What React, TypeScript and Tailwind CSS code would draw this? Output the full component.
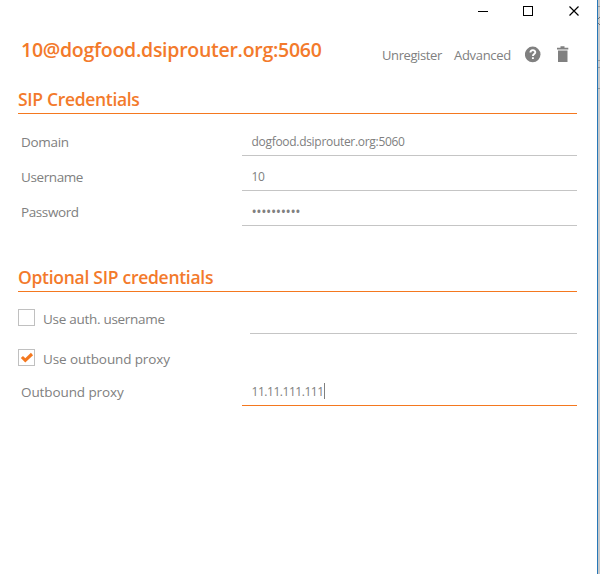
import type { ReactNode } from "react";

function SectionTitle({ children }: { children: ReactNode }) {
  return (
    <h2 className="h-[28px] border-b border-[#f4781f] text-[17.5px] leading-[27px] font-semibold whitespace-nowrap text-[#f37a2b]">
      {children}
    </h2>
  );
}

function Field({ label, children, active = false }: { label: ReactNode; children: ReactNode; active?: boolean }) {
  return (
    <div className="flex h-[35px]">
      <div className="w-[224px] pt-[11px] pl-[3px] text-[13.5px] leading-5 whitespace-nowrap">{label}</div>
      <div
        className={`flex flex-1 border-b pt-[12px] pl-[9.5px] text-[12px] leading-[18px] whitespace-nowrap ${active ? "border-[#f4781f]" : "border-[#c5c5c5]"}`}
      >
        {children}
      </div>
    </div>
  );
}

function CheckBox({ checked = false }: { checked?: boolean }) {
  return (
    <span className="block h-[17px] w-[17px] border border-[#c0c0c0]">
      {checked && (
        <svg width="15" height="15" viewBox="0 0 15 15">
          <path d="M2.9 7 L6.3 10.3 L13 4" fill="none" stroke="#f4781f" strokeWidth="3.1" />
        </svg>
      )}
    </span>
  );
}

export default function App() {
  return (
    <div className="flex h-[574px] w-[600px] overflow-hidden bg-white font-['Open_Sans','Noto_Sans',sans-serif] text-[#808080]">
      <main className="w-[597px] pr-[20px] pl-[18px]">
        <div className="-mr-[20px] flex h-[24px] justify-end">
          <svg width="130" height="24" viewBox="0 0 130 24" fill="none" stroke="#000" shapeRendering="crispEdges">
            <path d="M11 11.5H21" />
            <path d="M56.5 6.5h9v9h-9z" />
            <path d="M102.5 6.5l9 9M111.5 6.5l-9 9" shapeRendering="auto" strokeWidth="1.2" />
          </svg>
        </div>
        <header className="flex h-[62px] pl-[3px]">
          <h1 className="w-[361px] pt-[12px] text-[19.5px] leading-7 font-semibold whitespace-nowrap text-[#f37a2b]">
            <span className="tracking-[-0.27px]">10@dogfood.dsiprouter.org:5060</span>
          </h1>
          <span className="w-[72px] pt-[22px] text-[13px] leading-[18px]">
            <span className="tracking-[-0.4px]">Unregister</span>
          </span>
          <span className="w-[71px] pt-[22px] text-[13px] leading-[18px]">
            <span className="tracking-[-0.3px]">Advanced</span>
          </span>
          <svg className="mt-[22px]" width="16" height="17" viewBox="0 0 16 17">
            <circle cx="7.7" cy="8.4" r="7.8" fill="#808080" />
            <path d="M5.4 6.6C5.4 3.4 10.3 3.4 10.3 6.3C10.3 8 7.9 8.1 7.9 10.1M7.9 11.3v1.8" fill="none" stroke="#fff" strokeWidth="1.9" />
          </svg>
          <svg className="mt-[22px] ml-[15px]" width="13" height="17" viewBox="0 0 13 17" fill="#808080">
            <path d="M4.5 0.3h4v1.5H12.3v1.7H1v-1.7h3.500z" />
            <path d="M2 4.500h9.500V16h-9.500z" />
          </svg>
        </header>
        <SectionTitle>
          <span className="tracking-[-0.33px]">SIP Credentials</span>
        </SectionTitle>
        <div className="pt-[7px]">
          <Field label={<span className="tracking-[-0.3px]">Domain</span>}>
            <span className="tracking-[-0.3px]">dogfood.dsiprouter.org:5060</span>
          </Field>
          <Field label={<span className="tracking-[-0.4px]">Username</span>}>
            <span className="tracking-[-0.3px]">10</span>
          </Field>
          <Field label={<span className="tracking-[-0.4px]">Password</span>}>
            <span className="text-[14px] tracking-[-0.4px]">••••••••••</span>
          </Field>
        </div>
        <div className="pt-[38px]">
          <SectionTitle>
            <span className="tracking-[-0.28px]">Optional SIP credentials</span>
          </SectionTitle>
        </div>
        <div className="flex h-[42px] pt-[17px]">
          <CheckBox />
          <span className="w-[215px] pl-[8px] text-[13.5px] leading-5 whitespace-nowrap">
            <span className="tracking-[-0.29px]">Use auth. username</span>
          </span>
          <div className="-mt-[17px] flex-1 border-b border-[#c5c5c5]" />
        </div>
        <div className="flex h-[37px] pt-[15px]">
          <CheckBox checked />
          <span className="pl-[8px] text-[13.5px] leading-5 whitespace-nowrap">
            <span className="tracking-[-0.12px]">Use outbound proxy</span>
          </span>
        </div>
        <Field active label={<span className="tracking-[-0.1px]">Outbound proxy</span>}>
          <span className="tracking-[-0.46px]">11.11.111.111</span>
          <span className="h-[16px] w-px bg-[#808080]" />
        </Field>
      </main>
      <div className="w-px bg-[#2878b8]" />
      <div className="flex w-[2px] flex-col bg-[#c9c9c9]">
        <div className="h-[7px] border-b border-[#999]" />
        <div className="mt-[10px] ml-px h-px w-px bg-[#777]" />
        <div className="h-px w-px bg-[#777]" />
        <div className="mt-[4px] h-px w-px bg-[#777]" />
        <div className="ml-px h-px w-px bg-[#777]" />
        <div className="mt-[35px] h-px bg-[#999]" />
        <div className="mt-[6px] h-px bg-[#999]" />
        <div className="mt-[20px] h-px bg-[#999]" />
      </div>
    </div>
  );
}
